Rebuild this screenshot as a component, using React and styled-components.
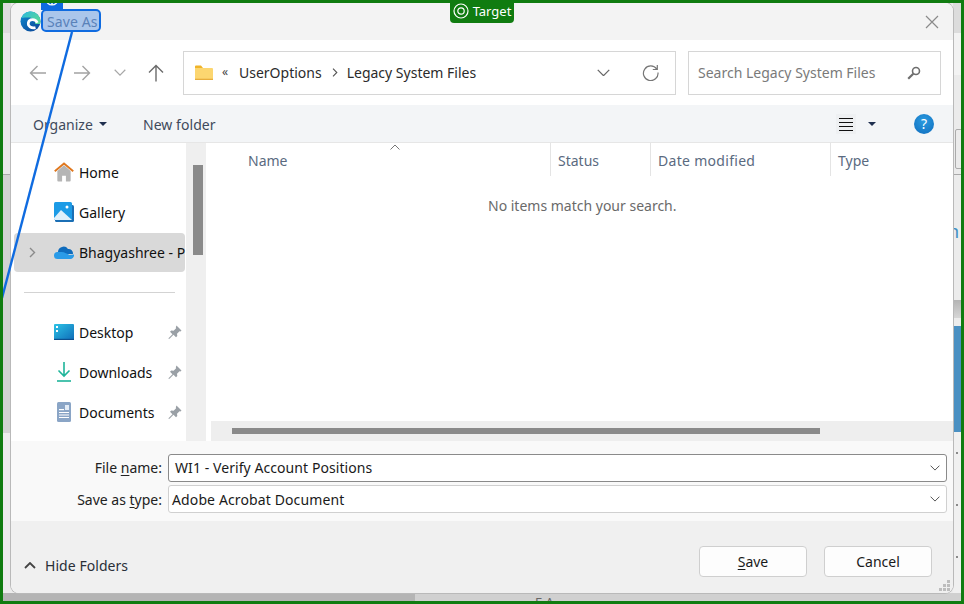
import React from "react";
import styled, { createGlobalStyle } from "styled-components";

const Global = createGlobalStyle`
  html, body { margin: 0; padding: 0; background: #fff; }
  * { box-sizing: border-box; }
`;

const FONT = `"Noto Sans", "Open Sans", "Liberation Sans", sans-serif`;

const Frame = styled.div`
  position: relative;
  width: 964px;
  height: 604px;
  border: 3px solid #107c10;
  padding: 0 8px 8px 8px;
  background: #ececec;
  overflow: hidden;
  font-family: ${FONT};
  font-size: 14px;
  color: #1a1a1a;
`;

const LeftStrip = styled.div`
  position: absolute;
  left: 0;
  top: 0;
  width: 8px;
  height: 590px;
  background: linear-gradient(
    #dcdcdc 0 30px,
    #e9e9e9 30px 171px,
    #a9a9a9 171px 172px,
    #d2d2d2 172px 430px,
    #ececec 430px
  );
`;
const RightStrip = styled.div`
  position: absolute;
  right: 0;
  top: 0;
  width: 8px;
  height: 590px;
  background: linear-gradient(
    #dcdcdc 0 30px,
    #f3f3f3 30px 72px,
    #ebebeb 72px 171px,
    #a9a9a9 171px 172px,
    #ececec 172px 297px,
    #b4b4b4 297px,
    #d6d6d6 315px,
    #ececec 315px 323px,
    #4a90c2 323px 429px,
    #f0f0f0 429px
  );
`;
const StripBox = styled.div`
  position: absolute;
  right: -3px;
  top: 126px;
  width: 9px;
  height: 40px;
  border: 1px solid #ababab;
  border-radius: 2px;
`;
const StripGlyph = styled.span`
  position: absolute;
  left: -5px;
  top: 218px;
  font-size: 18px;
  line-height: 20px;
  color: #3f8fc4;
`;
const StripDot = styled.span`
  position: absolute;
  left: 3px;
  top: ${p => p.$y}px;
  width: 2px;
  height: 2px;
  background: #8a8a8a;
`;
const BottomStrip = styled.div`
  position: absolute;
  left: 0;
  right: 0;
  bottom: 0;
  height: 8px;
  background: linear-gradient(90deg, #b4b4b4 0 412px, #d0d0d0 412px);
  overflow: hidden;
`;
const BottomGlyph = styled.span`
  position: absolute;
  left: 532px;
  top: 1px;
  font-size: 13px;
  line-height: 16px;
  color: #666;
`;

const Dialog = styled.div`
  position: relative;
  z-index: 1;
  width: 942px;
  height: 590px;
  display: flex;
  flex-direction: column;
  background: #fff;
  border-radius: 8px;
  overflow: hidden;
  box-shadow: 0 0 0 1px #b9b9b9;
`;

const TitleBar = styled.div`
  height: 37px;
  flex: none;
  display: flex;
  align-items: center;
  justify-content: space-between;
  padding: 0 14px 0 9px;
  background: #f3f3f3;
`;
const TitleLeft = styled.div`
  display: flex;
  align-items: center;
  gap: 6px;
`;
const TitleText = styled.span`
  font-size: 14px;
  letter-spacing: 0.1px;
  color: #7a8ca8;
`;

const NavRow = styled.div`
  height: 65px;
  flex: none;
  display: flex;
  align-items: center;
  padding: 0 12px 0 15px;
  background: #fff;
`;
const NavIcons = styled.div`
  width: 157px;
  flex: none;
  display: flex;
  align-items: center;
`;
const NavBtn = styled.span`
  width: ${p => p.$w}px;
  flex: none;
  display: flex;
  justify-content: center;
`;
const AddressBox = styled.div`
  width: 493px;
  height: 44px;
  flex: none;
  border: 1px solid #d6d6d6;
  display: flex;
  align-items: center;
  padding: 0 16px 0 11px;
  color: #2b2b2b;
`;
const Crumbs = styled.div`
  flex: 1;
  display: flex;
  align-items: center;
  gap: 9px;
`;
const CrumbMark = styled.span`
  font-size: 12px;
  width: 8px;
  color: #444;
  margin-top: -3px;
`;
const SepSvg = styled.svg`
  margin-left: 1px;
`;
const AddressActions = styled.div`
  display: flex;
  align-items: center;
  gap: 32px;
`;
const SearchBox = styled.div`
  width: 253px;
  height: 44px;
  flex: none;
  margin-left: 12px;
  border: 1px solid #d6d6d6;
  display: flex;
  align-items: center;
  justify-content: space-between;
  padding: 0 19px 0 9px;
  color: #7a7a7a;
`;

const CommandBar = styled.div`
  height: 38px;
  flex: none;
  display: flex;
  align-items: center;
  padding: 1px 19px 0 22px;
  background: #f3f5f7;
  border-bottom: 1px solid #e6e6e6;
  color: #3f4a5c;
`;
const Organize = styled.span`
  display: flex;
  align-items: center;
  gap: 6px;
  width: 110px;
`;
const NewFolder = styled.span`
  letter-spacing: 0.05px;
`;
const Caret = styled.span`
  width: 0;
  height: 0;
  border-left: 4px solid transparent;
  border-right: 4px solid transparent;
  border-top: 4px solid #1f2f4f;
`;
const Spacer = styled.div`
  flex: 1;
`;
const ViewBtn = styled.span`
  width: 20px;
  height: 20px;
  display: flex;
  align-items: center;
  justify-content: center;
  background: #eef0f2;
  margin-right: 12px;
`;
const Help = styled.span`
  width: 20px;
  height: 20px;
  margin-left: 38px;
  border-radius: 50%;
  background: radial-gradient(circle at 50% 35%, #2a9be0, #0f6cbd);
  color: #fff;
  font-size: 14px;
  line-height: 20px;
  text-align: center;
`;

const Main = styled.div`
  height: 298px;
  flex: none;
  display: flex;
  background: #fff;
`;
const NavPane = styled.div`
  width: 175px;
  flex: none;
  overflow: hidden;
  padding: 10px 0 0 3px;
`;
const NavItem = styled.div`
  position: relative;
  display: flex;
  align-items: center;
  width: 171px;
  height: ${p => (p.$selected ? 39 : 40)}px;
  padding: 0 0 ${p => (p.$selected ? 1 : 2)}px 40px;
  border-radius: 4px;
  white-space: nowrap;
  background: ${p => (p.$selected ? "#d9d9d9" : "transparent")};
  color: #111;
`;
const NavIcon = styled.span`
  width: 20px;
  height: 20px;
  flex: none;
  margin-right: 5px;
  display: flex;
  align-items: center;
  justify-content: center;
`;
const Expander = styled.span`
  position: absolute;
  left: 15px;
  top: 14px;
  display: flex;
`;
const Pin = styled.span`
  position: absolute;
  left: 154px;
  top: 12px;
  display: flex;
`;
const NavDivider = styled.div`
  height: 1px;
  width: 151px;
  margin: 20px 0 20px 10px;
  background: #d3d3d3;
`;
const VScroll = styled.div`
  width: 20px;
  flex: none;
  background: #efefef;
  padding: 22px 3px 0 7px;
`;
const VThumb = styled.div`
  height: 90px;
  background: #8a8a8a;
`;
const ListPane = styled.div`
  flex: 1;
  margin-left: 5px;
  min-width: 0;
  display: flex;
  flex-direction: column;
`;
const Header = styled.div`
  position: relative;
  height: 33px;
  flex: none;
  display: flex;
  color: #5a6a80;
`;
const Col = styled.div`
  width: ${p => p.$w}px;
  flex: none;
  height: 33px;
  display: flex;
  align-items: center;
  padding-left: ${p => p.$pl}px;
  padding-top: 1px;
  letter-spacing: ${p => p.$ls || 0}px;
  border-right: ${p => (p.$sep ? "1px solid #e4e4e4" : "none")};
`;
const SortMark = styled.span`
  position: absolute;
  left: 179px;
  top: 1px;
  display: flex;
`;
const ListBody = styled.div`
  flex: 1;
  padding: 20px 0 0 277px;
  color: #6a6a6a;
`;
const HScroll = styled.div`
  height: 20px;
  flex: none;
  background: #eeeeee;
  padding: 7px 0 0 21px;
`;
const HThumb = styled.div`
  width: 588px;
  height: 6px;
  background: #8a8a8a;
`;

const Form = styled.div`
  height: 80px;
  flex: none;
  background: #f9f9f9;
  padding: 13px 6px 0 0;
  display: flex;
  flex-direction: column;
  gap: 3px;
`;
const FormRow = styled.div`
  display: flex;
  align-items: center;
  gap: 6px;
`;
const Label = styled.label`
  width: 151px;
  flex: none;
  text-align: right;
  color: #222;
  margin-bottom: ${p => (p.$lift ? 2 : 0)}px;
`;
const Field = styled.div`
  flex: 1;
  height: 28px;
  display: flex;
  align-items: center;
  justify-content: space-between;
  padding: 0 6px 0 ${p => (p.$active ? 6 : 3)}px;
  background: #fff;
  border: 1px solid ${p => (p.$active ? "#8a8a8a" : "#d0d0d0")};
  border-radius: 3px;
  color: #1a1a1a;
`;
const FieldText = styled.span`
  letter-spacing: ${p => (p.$lift ? 0.07 : 0.12)}px;
  margin-bottom: ${p => (p.$lift ? 2 : 0)}px;
`;
const Footer = styled.div`
  position: relative;
  flex: 1;
  background: #f0f0f0;
  display: flex;
  align-items: center;
  padding: 8px 21px 0 13px;
`;
const HideFolders = styled.div`
  display: flex;
  align-items: center;
  gap: 9px;
  color: #2a2f38;
  flex: 1;
  padding-top: 8px;
  letter-spacing: 0.05px;
`;
const Button = styled.button`
  width: 108px;
  height: 31px;
  margin-left: ${p => p.$ml || 0}px;
  border: 1px solid #cfcfcf;
  border-radius: 4px;
  background: #fdfdfd;
  font: inherit;
  color: #1a1a1a;
  padding: 0;
`;
const Grip = styled.span`
  position: absolute;
  right: 3px;
  bottom: 2px;
  display: flex;
`;

const TargetTag = styled.div`
  position: absolute;
  z-index: 3;
  left: 447px;
  top: -3px;
  width: 64px;
  height: 23px;
  padding-bottom: 1px;
  display: flex;
  align-items: center;
  justify-content: center;
  gap: 4px;
  background: #107c10;
  border-radius: 0 0 4px 4px;
  color: #fff;
  font-size: 13px;
`;
const Highlight = styled.div`
  position: absolute;
  z-index: 3;
  left: 38px;
  top: 6px;
  width: 60px;
  height: 23px;
  border: 2px solid #0f6be0;
  border-radius: 5px;
  background: rgba(30, 110, 220, 0.34);
`;
const InfoTag = styled.div`
  position: absolute;
  z-index: 4;
  left: 38px;
  top: -3px;
  width: 22px;
  height: 10px;
  background: #0f6be0;
  display: flex;
  justify-content: center;
  align-items: flex-start;
  overflow: hidden;
`;
const InfoSvg = styled.svg`
  flex: none;
  margin-top: -8px;
`;
const Leader = styled.svg`
  position: absolute;
  z-index: 2;
  left: -3px;
  top: -3px;
  pointer-events: none;
`;

const Edge = () => (
  <svg width="21" height="21" viewBox="0 0 21 21" fill="none">
    <defs>
      <linearGradient id="eb" x1="0" y1="0" x2="0.7" y2="1">
        <stop offset="0" stopColor="#0f8fd4" />
        <stop offset="1" stopColor="#0b4c9c" />
      </linearGradient>
      <linearGradient id="eg" x1="0" y1="0" x2="1" y2="0.6">
        <stop offset="0" stopColor="#2bb8e0" />
        <stop offset="1" stopColor="#55d79a" />
      </linearGradient>
    </defs>
    <circle cx="10.5" cy="10.5" r="10" fill="url(#eb)" />
    <path d="M1.500 7C3 2.500 7 .5 10.500.5c5.500 0 10 4.500 10 10 0 1-.1 1.500-.3 2.500h-5c0-4-3-6.500-6-6.500-3 0-5.500-.5-8.200.5z" fill="url(#eg)" />
    <path d="M17.300 11.800C15.500 7.500 9 7.300 8.300 12c-.4 3 2.700 5.700 7.200 4.600" stroke="#fff" strokeWidth="2.700" />
  </svg>
);
const Close = () => (
  <svg width="14" height="14" viewBox="0 0 14 14" fill="none" stroke="#8a8a8a" strokeWidth="1.2">
    <path d="M1 1l12 12M13 1L1 13" />
  </svg>
);
const ArrowLeft = ({ c = "#a3a3a3", flip }) => (
  <svg width="18" height="16" viewBox="0 0 18 16" fill="none" stroke={c} strokeWidth="1.4" style={flip ? { transform: "scaleX(-1)" } : undefined}>
    <path d="M1.500 8h15.500M8.500 1L1.500 8l7 7" />
  </svg>
);
const ArrowUp = () => (
  <svg width="16" height="18" viewBox="0 0 16 18" fill="none" stroke="#6a6a6a" strokeWidth="1.4">
    <path d="M8 17.500V1.500M1 8.500l7-7 7 7" />
  </svg>
);
const Chevron = ({ c = "#a8a8a8", w = 12 }) => (
  <svg width={w} height={w * 0.6} viewBox="0 0 12 7" fill="none" stroke={c} strokeWidth="1.2">
    <path d="M.7.7L6 6l5.300-5.300" />
  </svg>
);
const Folder = () => (
  <svg width="18" height="15" viewBox="0 0 18 15">
    <path d="M0 1.500A1 1 0 011 .5h5l2 2.500H0z" fill="#f0b429" />
    <path d="M0 3h17a1 1 0 011 1v10a1 1 0 01-1 1H1a1 1 0 01-1-1z" fill="#fcd670" />
    <rect y="13.700" width="18" height="1.300" fill="#e7ad3c" />
  </svg>
);
const BreadSep = () => (
  <SepSvg width="6" height="9" viewBox="0 0 6 9" fill="none" stroke="#555" strokeWidth="1.100">
    <path d="M1 .7l3.800 3.800L1 8.300" />
  </SepSvg>
);
const Refresh = () => (
  <svg width="17" height="17" viewBox="0 0 17 17" fill="none" stroke="#777" strokeWidth="1.200">
    <path d="M14.800 5.200A7.300 7.300 0 1016 8.500M15.300 1v4.500h-4.500" />
  </svg>
);
const SearchIcon = () => (
  <svg width="14" height="14" viewBox="0 0 14 14" fill="none" stroke="#6e6e6e">
    <circle cx="9" cy="5" r="3.500" strokeWidth="1.600" />
    <path d="M6.300 7.700L1.200 12.800" strokeWidth="2.200" />
  </svg>
);
const ListIcon = () => (
  <svg width="14" height="13" viewBox="0 0 14 13" stroke="#111" strokeWidth="1">
    <path d="M0 .5h14M0 4.500h14M0 8.500h14M0 12.500h14" />
  </svg>
);
const Home = () => (
  <svg width="21" height="20" viewBox="0 0 21 20">
    <path d="M3.500 9L10.500 3l7 6v10a1 1 0 01-1 1h-4v-6h-4v6h-4a1 1 0 01-1-1z" fill="#b5b5b5" />
    <path d="M.8 9.300L10.500 1l9.700 8.300" fill="none" stroke="#e0781f" strokeWidth="2" />
  </svg>
);
const Gallery = () => (
  <svg width="20" height="20" viewBox="0 0 20 20">
    <rect x="1" y="3" width="19" height="17" rx="1.500" fill="#1b6fb5" />
    <rect x="0" y="0" width="18" height="18" rx="1.500" fill="#1c9be6" />
    <circle cx="13" cy="5" r="1.500" fill="#fff" />
    <path d="M0 16l7-8 11 10H1.500A1.500 1.500 0 010 16.500z" fill="#dff0fb" />
  </svg>
);
const Cloud = () => (
  <svg width="20" height="14" viewBox="0 0 20 14">
    <path d="M4 7a5.500 5.500 0 0110-3 4.500 4.500 0 015 5H4z" fill="#0f6cbd" />
    <path d="M3.500 14A3.500 3.500 0 013.500 7h4c3 0 6 2 8 3l4.500-.5c.5 2-1 4.500-3.500 4.500z" fill="#2a9be8" />
  </svg>
);
const Desktop = () => (
  <svg width="20" height="16" viewBox="0 0 20 16">
    <defs>
      <linearGradient id="dk" x1="0" y1="0" x2="1" y2="1">
        <stop offset="0" stopColor="#2cc3e6" />
        <stop offset="1" stopColor="#0f6cb8" />
      </linearGradient>
    </defs>
    <rect width="20" height="16" rx="1" fill="url(#dk)" />
    <rect x="2" y="2" width="2" height="2" fill="#fff" />
    <rect x="2" y="6" width="2" height="2" fill="#fff" />
    <rect y="14.800" width="20" height="1.200" fill="#0c4f8f" />
  </svg>
);
const Download = () => (
  <svg width="14" height="20" viewBox="0 0 14 20" fill="none" stroke="#1fb59a" strokeWidth="1.600">
    <path d="M7 0v14M1.500 8.500L7 14l5.500-5.500" />
    <path d="M0 19h14" />
  </svg>
);
const Doc = () => (
  <svg width="14" height="20" viewBox="0 0 14 20">
    <rect width="14" height="20" rx="1.500" fill="#8aa5c6" />
    <rect x="2" y="7" width="5" height="1.200" fill="#fff" />
    <rect x="8" y="3" width="4" height="5" fill="#e3ecf6" />
    <rect x="2" y="10" width="10" height="1" fill="#fff" />
    <rect x="2" y="12.500" width="10" height="1" fill="#fff" />
    <rect x="2" y="15" width="10" height="1" fill="#fff" />
  </svg>
);
const PinIcon = () => (
  <svg width="14" height="14" viewBox="0 0 14 14" fill="#9aa0a6">
    <path d="M8.500.5l5 5-1 1-1-.3-2.500 2.500.3 2.300-1.300 1.300-2.500-2.500-4 4H.5v-.5l4-4L2 6.800l1.300-1.300 2.300.3L8.100 3.300l-.3-1z" />
  </svg>
);
const TargetIcon = () => (
  <svg width="16" height="16" viewBox="0 0 16 16" fill="none" stroke="#fff" strokeWidth="1.200">
    <circle cx="8" cy="8" r="7" />
    <circle cx="8" cy="8" r="3.200" />
  </svg>
);
const InfoIcon = () => (
  <InfoSvg width="14" height="14" viewBox="0 0 14 14" fill="none" stroke="#fff" strokeWidth="1.200">
    <circle cx="7" cy="7" r="6" />
    <path d="M7 5v8" strokeWidth="1.500" />
  </InfoSvg>
);
const GripIcon = () => (
  <svg width="11" height="11" viewBox="0 0 11 11" fill="#bdbdbd">
    {[[8,0],[4,4],[8,4],[0,8],[4,8],[8,8]].map(([x, y]) => (
      <rect key={`${x}-${y}`} x={x} y={y} width="3" height="3" />
    ))}
  </svg>
);

const U = styled.span`
  text-decoration: underline;
  text-underline-offset: 2px;
`;

const quick = [
  { name: "Desktop", icon: <Desktop /> },
  { name: "Downloads", icon: <Download /> },
  { name: "Documents", icon: <Doc /> },
];

export default function App() {
  return (
    <>
      <Global />
      <Frame>
        <LeftStrip />
        <RightStrip>
          <StripBox />
          <StripGlyph>n</StripGlyph>
          <StripDot $y={449} />
          <StripDot $y={501} />
          <StripDot $y={553} />
        </RightStrip>
        <BottomStrip><BottomGlyph>E A</BottomGlyph></BottomStrip>
        <Dialog>
          <TitleBar>
            <TitleLeft>
              <Edge />
              <TitleText>Save As</TitleText>
            </TitleLeft>
            <Close />
          </TitleBar>
          <NavRow>
            <NavIcons>
              <NavBtn $w={24}><ArrowLeft /></NavBtn>
              <NavBtn $w={64}><ArrowLeft flip /></NavBtn>
              <NavBtn $w={12}><Chevron /></NavBtn>
              <NavBtn $w={60}><ArrowUp /></NavBtn>
            </NavIcons>
            <AddressBox>
              <Crumbs>
                <Folder />
                <CrumbMark>«</CrumbMark>
                <span>UserOptions</span>
                <BreadSep />
                <span>Legacy System Files</span>
              </Crumbs>
              <AddressActions>
                <Chevron c="#666" w={13} />
                <Refresh />
              </AddressActions>
            </AddressBox>
            <SearchBox>
              <span>Search Legacy System Files</span>
              <SearchIcon />
            </SearchBox>
          </NavRow>
          <CommandBar>
            <Organize>Organize <Caret /></Organize>
            <NewFolder>New folder</NewFolder>
            <Spacer />
            <ViewBtn><ListIcon /></ViewBtn>
            <Caret />
            <Help>?</Help>
          </CommandBar>
          <Main>
            <NavPane>
              <NavItem><NavIcon><Home /></NavIcon>Home</NavItem>
              <NavItem><NavIcon><Gallery /></NavIcon>Gallery</NavItem>
              <NavItem $selected>
                <Expander><svg width="7" height="11" viewBox="0 0 7 11" fill="none" stroke="#8a8a8a" strokeWidth="1.400"><path d="M1 1l4.500 4.500L1 10" /></svg></Expander>
                <NavIcon><Cloud /></NavIcon>Bhagyashree - P
              </NavItem>
              <NavDivider />
              {quick.map(q => (
                <NavItem key={q.name}>
                  <NavIcon>{q.icon}</NavIcon>{q.name}
                  <Pin><PinIcon /></Pin>
                </NavItem>
              ))}
            </NavPane>
            <VScroll><VThumb /></VScroll>
            <ListPane>
              <Header>
                <SortMark>
                  <svg width="10" height="6" viewBox="0 0 10 6" fill="none" stroke="#777"><path d="M.5 5.500L5 1l4.500 4.500" /></svg>
                </SortMark>
                <Col $w={340} $pl={37} $sep>Name</Col>
                <Col $w={100} $pl={7} $sep>Status</Col>
                <Col $w={180} $pl={7} $ls={0.3} $sep>Date modified</Col>
                <Col $w={122} $pl={7}>Type</Col>
              </Header>
              <ListBody>No items match your search.</ListBody>
              <HScroll><HThumb /></HScroll>
            </ListPane>
          </Main>
          <Form>
            <FormRow>
              <Label $lift>File <U>n</U>ame:</Label>
              <Field $active>
                <FieldText $lift>WI1 - Verify Account Positions</FieldText>
                <Chevron c="#555" w={10} />
              </Field>
            </FormRow>
            <FormRow>
              <Label>Save as <U>t</U>ype:</Label>
              <Field>
                <FieldText>Adobe Acrobat Document</FieldText>
                <Chevron c="#555" w={10} />
              </Field>
            </FormRow>
          </Form>
          <Footer>
            <HideFolders>
              <svg width="12" height="7" viewBox="0 0 12 7" fill="none" stroke="#444" strokeWidth="1.800"><path d="M1 6l5-5 5 5" /></svg>
              Hide Folders
            </HideFolders>
            <Button><U>S</U>ave</Button>
            <Button $ml={17}>Cancel</Button>
            <Grip><GripIcon /></Grip>
          </Footer>
        </Dialog>
        <Leader width="100" height="310" viewBox="0 0 100 310" fill="none">
          <path d="M72 32L2 298" stroke="#0f6be0" strokeWidth="2.400" />
        </Leader>
        <Highlight />
        <InfoTag><InfoIcon /></InfoTag>
        <TargetTag><TargetIcon />Target</TargetTag>
      </Frame>
    </>
  );
}
